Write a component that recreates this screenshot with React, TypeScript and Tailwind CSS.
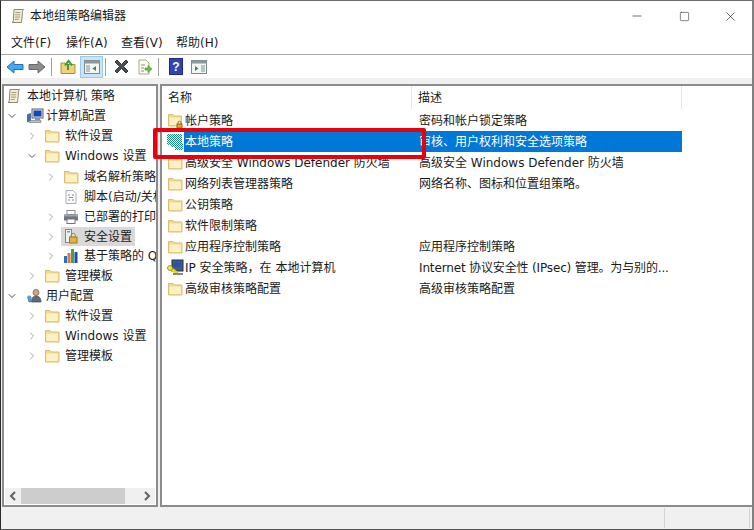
import { ChevronDown, ChevronRight, Minus, Square, X } from "lucide-react";

const FONT = "font-['DejaVu_Sans','Noto_Sans_CJK_SC',sans-serif]";

// Small icons
const Folder = ({ className = "" }: { className?: string }) => (
  <svg width="16" height="16" viewBox="0 0 16 16" className={`shrink-0 ${className}`}>
    <path d="M1.500 2.500h4.500l1.200 1.500h7.800v10h-13.500z" fill="#f3d98c" stroke="#d8bd74" />
    <rect x="2.500" y="5.500" width="11.500" height="7.500" fill="#fdf1c4" />
  </svg>
);

const ScrollIcon = ({ className = "" }: { className?: string }) => (
  <svg width="16" height="16" viewBox="0 0 16 16" className={`shrink-0 ${className}`}>
    <path d="M4 1.500h9.500c-1 1-1.200 2-1 3L11.500 14.500H2c1-.6 1.300-1.300 1.400-2.500z" fill="#f4edd4" stroke="#8f8770" />
    <path d="M5.500 4.500h5M5.200 6.800h5M5 9.100h5M4.800 11.400h4" stroke="#a39a80" />
  </svg>
);

const ComputerIcon = () => (
  <svg width="18" height="16" viewBox="0 0 18 16" className="shrink-0">
    <rect x="6" y="1" width="11" height="9" fill="#dfe6ef" stroke="#59636f" />
    <rect x="7.500" y="2.500" width="8" height="6" fill="#1447b0" />
    <rect x="9" y="10" width="5" height="2" fill="#8d97a3" />
    <path d="M1.500 6.500l3-1v7l-3 1.500z" fill="#3c6fb8" stroke="#2c4470" strokeWidth=".6" />
    <path d="M5 12.500h10v2H3z" fill="#b8c0ca" stroke="#6f7782" strokeWidth=".6" />
  </svg>
);

const UserIcon = () => (
  <svg width="18" height="16" viewBox="0 0 18 16" className="shrink-0">
    <circle cx="10" cy="4.500" r="3" fill="#d9a37c" stroke="#6b5a4a" strokeWidth=".7" />
    <path d="M5.500 14c0-4 1.500-6 4.500-6s5 2 5 6z" fill="#5c6c80" stroke="#3a4656" strokeWidth=".7" />
    <path d="M1.500 9c1-1.500 3-1.500 3.500 0l-.5 5H3z" fill="#5fa0d8" stroke="#3470a8" strokeWidth=".7" />
  </svg>
);

const ScriptIcon = () => (
  <svg width="16" height="16" viewBox="0 0 16 16" className="shrink-0">
    <path d="M3 1.500h7l3 3v10H3z" fill="#fbfbfb" stroke="#a9adb3" />
    <path d="M5 6h2M9 6h2M6 8.500h4M5 11h2M9 11h2" stroke="#7f858c" />
  </svg>
);

const PrinterIcon = () => (
  <svg width="16" height="16" viewBox="0 0 16 16" className="shrink-0">
    <rect x="4" y="1.500" width="8" height="4" fill="#fff" stroke="#8a8f96" />
    <rect x="1" y="5.500" width="14" height="6" fill="#6e7680" />
    <rect x="1" y="5.500" width="14" height="2" fill="#9aa1aa" />
    <rect x="4" y="10" width="8" height="4.500" fill="#fff" stroke="#6e7680" />
  </svg>
);

const LockDocIcon = () => (
  <svg width="16" height="16" viewBox="0 0 16 16" className="shrink-0">
    <rect x="2.500" y="0.500" width="6" height="13" fill="#eef1f4" stroke="#7f8892" />
    <rect x="4" y="2" width="3" height="1.500" fill="#8a96a3" />
    <path d="M8 8V6.500a2.200 2.200 0 0 1 4.400 0V8" fill="none" stroke="#9a8a5a" />
    <rect x="6.500" y="8" width="7.500" height="6" fill="#e2b33e" stroke="#9a7a22" />
  </svg>
);

const ChartIcon = () => (
  <svg width="16" height="16" viewBox="0 0 16 16" className="shrink-0">
    <rect x="1" y="8" width="3" height="7" fill="#2a6fc0" />
    <rect x="4.500" y="5" width="3" height="10" fill="#e8703a" />
    <rect x="8" y="1" width="3" height="14" fill="#3aa84a" />
    <rect x="11.500" y="4" width="3" height="11" fill="#1d4f9a" />
  </svg>
);

const FolderLockIcon = () => (
  <svg width="18" height="16" viewBox="0 0 18 16" className="shrink-0">
    <path d="M1.500 1.500h4.500l1.200 1.500h7.300v10h-13z" fill="#f3d98c" stroke="#d8bd74" />
    <rect x="2.500" y="4.500" width="11" height="7.500" fill="#fdf1c4" />
    <path d="M11 11V9.800a1.500 1.500 0 0 1 3 0V11" fill="none" stroke="#8a7a3a" />
    <rect x="10" y="11" width="5" height="4" fill="#d9a92e" stroke="#8f6f18" />
  </svg>
);

const LocalPolicyIcon = () => (
  <svg width="17" height="17" viewBox="0 0 17 17" className="shrink-0">
    <defs>
      <pattern id="dither" width="2" height="2" patternUnits="userSpaceOnUse">
        <rect width="2" height="2" fill="#f2f6f4" />
        <rect width="1" height="1" fill="#1f7f9f" />
        <rect x="1" y="1" width="1" height="1" fill="#1f8f80" />
      </pattern>
    </defs>
    <path d="M0 1h15v10h1v6H8v-3H4v-2H0z" fill="url(#dither)" />
  </svg>
);

const IpsecIcon = () => (
  <svg width="18" height="18" viewBox="0 0 18 18" className="shrink-0">
    <rect x="5" y="1" width="11" height="11" fill="#4a5a78" stroke="#26304a" />
    <rect x="7" y="3" width="7" height="5" fill="#2a50a8" />
    <path d="M2 8l9 7" stroke="#e8d820" strokeWidth="3" />
    <circle cx="3" cy="9" r="2.500" fill="#f2e640" stroke="#6b6510" strokeWidth=".6" />
    <path d="M6 14h10v2H6z" fill="#7d8796" />
  </svg>
);

const tree = [
  { label: "本地计算机 策略", icon: <ScrollIcon />, row: "pl-[2px] gap-[5px] h-[20px]", arrow: null },
  { label: "计算机配置", icon: <ComputerIcon />, row: "pl-[3px] gap-[2px] h-[20px]", arrow: "root" },
  { label: "软件设置", icon: <Folder />, row: "pl-[23px] gap-[5px] h-[20px]", arrow: "closed" },
  { label: "Windows 设置", icon: <Folder />, row: "pl-[23px] gap-[5px] h-[20px]", arrow: "open" },
  { label: "域名解析策略", icon: <Folder />, row: "pl-[42px] gap-[5px] h-[21px]", arrow: "closed" },
  { label: "脚本(启动/关机)", icon: <ScriptIcon />, row: "pl-[59px] gap-[5px] h-[20px]", arrow: null },
  { label: "已部署的打印机", icon: <PrinterIcon />, row: "pl-[42px] gap-[5px] h-[20px]", arrow: "closed" },
  { label: "安全设置", icon: <LockDocIcon />, row: "pl-[42px] gap-[5px] h-[19px]", arrow: "closed", active: true },
  { label: "基于策略的 QoS", icon: <ChartIcon />, row: "pl-[42px] gap-[5px] h-[20px]", arrow: "closed" },
  { label: "管理模板", icon: <Folder />, row: "pl-[23px] gap-[5px] h-[20px]", arrow: "closed" },
  { label: "用户配置", icon: <UserIcon />, row: "pl-[3px] gap-[2px] h-[20px]", arrow: "root" },
  { label: "软件设置", icon: <Folder />, row: "pl-[23px] gap-[5px] h-[20px]", arrow: "closed" },
  { label: "Windows 设置", icon: <Folder />, row: "pl-[23px] gap-[5px] h-[20px]", arrow: "closed" },
  { label: "管理模板", icon: <Folder />, row: "pl-[23px] gap-[5px] h-[20px]", arrow: "closed" },
];

const rows = [
  { name: "帐户策略", desc: "密码和帐户锁定策略", icon: <FolderLockIcon /> },
  { name: "本地策略", desc: "审核、用户权利和安全选项策略", icon: <LocalPolicyIcon />, selected: true },
  { name: "高级安全 Windows Defender 防火墙", desc: "高级安全 Windows Defender 防火墙", icon: <Folder /> },
  { name: "网络列表管理器策略", desc: "网络名称、图标和位置组策略。", icon: <Folder /> },
  { name: "公钥策略", desc: "", icon: <Folder /> },
  { name: "软件限制策略", desc: "", icon: <Folder /> },
  { name: "应用程序控制策略", desc: "应用程序控制策略", icon: <Folder /> },
  { name: "IP 安全策略，在 本地计算机", desc: "Internet 协议安全性 (IPsec) 管理。为与别的...", icon: <IpsecIcon />, tight: true },
  { name: "高级审核策略配置", desc: "高级审核策略配置", icon: <Folder /> },
];

const menus = ["文件(F)", "操作(A)", "查看(V)", "帮助(H)"];

const Sep = ({ className = "mx-[5px]" }: { className?: string }) => (
  <div className={`w-px h-[18px] bg-[#a0a0a0] ${className}`} />
);

const ChevronLeftGlyph = () => (
  <svg width="8" height="10" viewBox="0 0 8 10"><path d="M6 1L2 5l4 4" fill="none" stroke="#606060" strokeWidth="2" /></svg>
);
const ChevronRightGlyph = () => (
  <svg width="8" height="10" viewBox="0 0 8 10"><path d="M2 1l4 4-4 4" fill="none" stroke="#606060" strokeWidth="2" /></svg>
);

const App = () => {
  return (
    <div className={`relative w-[754px] h-[530px] flex flex-col overflow-hidden bg-white text-[12px] text-[#1a1a1a] border-l border-t border-b border-r-2 border-l-[#2b2b2b] border-t-[#6e6e6e] border-b-[#555555] border-r-[#808080] ${FONT}`}>
      {/* Title bar */}
      <div className="h-[30px] flex items-center shrink-0">
        <ScrollIcon className="ml-[9px]" />
        <span className="ml-[4px] text-[12px]">本地组策略编辑器</span>
        <div className="ml-auto flex items-center text-[#111111]">
          <div className="w-[46px] flex justify-center mr-[1px]"><Minus size={14} strokeWidth={1} /></div>
          <div className="w-[46px] flex justify-center"><Square size={11} strokeWidth={1.1} /></div>
          <div className="w-[46px] flex justify-center -mr-px"><X size={15} strokeWidth={1} /></div>
        </div>
      </div>

      {/* Menu */}
      <div className="h-[24px] flex items-center gap-[15px] pl-[10px] border-b border-[#a8a8a8] shrink-0">
        {menus.map((m) => (
          <span key={m} className="w-[40px] whitespace-nowrap">{m}</span>
        ))}
      </div>

      {/* Toolbar */}
      <div className="h-[23px] flex items-center pl-[5px] shrink-0">
        <svg width="18" height="14" viewBox="0 0 18 14">
          <path d="M1 7l7-6v3.500h9v5H8V13z" fill="#45a8ec" stroke="#1f6fb5" />
        </svg>
        <svg width="18" height="14" viewBox="0 0 18 14" className="ml-[4px]">
          <path d="M17 7l-7-6v3.500H1v5h9V13z" fill="#8c8c8c" stroke="#6a6a6a" />
        </svg>
        <Sep />
        <svg width="16" height="16" viewBox="0 0 16 16" className="ml-[3px]">
          <path d="M1 4h4l1 1.500h9v9H1z" fill="#f0d27a" stroke="#a88c3a" />
          <path d="M8 11V5M5 6.500L8.500 2 12 6.500" fill="none" stroke="#3a9a3a" strokeWidth="2" />
        </svg>
        <div className="ml-[4px] w-[23px] h-[22px] flex items-center justify-center bg-[#cce4f7] border border-[#99cceb]">
          <svg width="16" height="14" viewBox="0 0 16 14">
            <rect x=".5" y=".5" width="15" height="13" fill="#f4f6f6" stroke="#7d8a8a" />
            <rect x=".5" y=".5" width="15" height="3" fill="#8a9a9a" />
            <rect x="2" y="5" width="4" height="7" fill="#b8c4c4" />
            <path d="M12 6v5L8.500 8.500z" fill="#2f8f4a" />
          </svg>
        </div>
        <Sep className="ml-[2px] mr-[5px]" />
        <svg width="17" height="17" viewBox="0 0 17 17" className="ml-[2px]">
          <path d="M2 4l2-2 4.500 4.500L13 2l2 2-4.500 4.500L15 13l-2 2-4.500-4.500L4 15l-2-2 4.500-4.500z" fill="#4a4f55" stroke="#33373b" />
        </svg>
        <svg width="16" height="16" viewBox="0 0 16 16" className="ml-[7px]">
          <path d="M2 1h7l3 3v11H2z" fill="#fdfdf6" stroke="#b0a888" />
          <path d="M4 6h4M4 9h3M4 12h3" stroke="#8a8a7a" />
          <path d="M8 9h3V6.500l4 3.500-4 3.500V11H8z" fill="#6cc04a" stroke="#3f8f2a" strokeWidth=".6" />
        </svg>
        <Sep />
        <div className="ml-[5px] w-[14px] h-[17px] bg-[#2f45b0] border border-[#1a2a80] flex items-center justify-center text-white font-bold text-[12px] leading-none font-['Liberation_Sans',sans-serif]">?</div>
        <svg width="16" height="14" viewBox="0 0 16 14" className="ml-[8px]">
          <rect x=".5" y=".5" width="15" height="13" fill="#f4f6f6" stroke="#7d8a8a" />
          <rect x=".5" y=".5" width="15" height="3" fill="#8a9a9a" />
          <rect x="10" y="5" width="4" height="7" fill="#b8c4c4" />
          <path d="M4 6v5l3.500-2.500z" fill="#2f8f4a" />
        </svg>
      </div>

      {/* Panes */}
      <div className="flex-1 min-h-0 flex flex-col bg-[#f0f0f0] pt-[6px]">
        <div className="flex-1 min-h-0 flex gap-[2px] pl-px">
          {/* Tree */}
          <div className="w-[156px] shrink-0 flex flex-col bg-white border-2 border-[#8c8c8c] overflow-hidden">
            <div className="flex-1 min-h-0 overflow-hidden">
              {tree.map((t, i) => (
                <div key={i} className={`flex items-center whitespace-nowrap ${t.row}`}>
                  {t.arrow === "root" && <ChevronDown size={12} strokeWidth={2} className="shrink-0 -ml-[1px] mr-[6px] text-[#555555]" />}
                  {t.arrow === "open" && <ChevronDown size={12} strokeWidth={2} className="shrink-0 -ml-[1px] mr-[1px] text-[#555555]" />}
                  {t.arrow === "closed" && <ChevronRight size={12} strokeWidth={2} className="shrink-0 -ml-[1px] mr-[1px] text-[#a6a6a6]" />}
                  {t.active ? (
                    <div className="flex items-center gap-[5px] -ml-[2px] pl-[2px] pr-[3px] h-[19px] bg-[#d9d9d9]">
                      {t.icon}
                      <span>{t.label}</span>
                    </div>
                  ) : (
                    <>
                      {t.icon}
                      <span>{t.label}</span>
                    </>
                  )}
                </div>
              ))}
            </div>
            {/* Horizontal scrollbar */}
            <div className="h-[16px] mb-[1px] shrink-0 flex items-center bg-[#f0f0f0] mx-[1px]">
              <div className="w-[16px] flex justify-center"><ChevronLeftGlyph /></div>
              <div className="w-[104px] h-[16px] bg-[#cdcdcd]" />
              <div className="ml-auto w-[16px] flex justify-center"><ChevronRightGlyph /></div>
            </div>
          </div>

          {/* List */}
          <div className="flex-1 min-w-0 bg-white border-l-2 border-t-2 border-b-2 border-[#8c8c8c]">
            <div className="h-[23px] flex items-center">
              <div className="w-[250px] pl-[6px] h-full flex items-center border-r border-[#e5e5e5]">名称</div>
              <div className="w-[270px] pl-[6px] h-full flex items-center border-r border-[#e5e5e5]">描述</div>
            </div>
            <div className="pt-[1px]">
              {rows.map((r) => (
                <div key={r.name} className="h-[21px] flex items-center whitespace-nowrap w-[520px]">
                  <div className="w-[250px] shrink-0 h-full flex items-center pl-[5px]">
                    <div className="w-[17px] shrink-0 flex justify-start">{r.icon}</div>
                    <span className={`h-full flex-1 flex items-center pl-px ${r.selected ? "bg-[#0078d7] text-white" : ""}`}>{r.name}</span>
                  </div>
                  <div className={`w-[270px] h-full shrink-0 flex items-center pl-[7px] ${r.selected ? "bg-[#0078d7] text-white" : ""} ${r.tight ? "tracking-[-0.15px]" : ""}`}>{r.desc}</div>
                </div>
              ))}
            </div>
          </div>
        </div>

        {/* Status bar */}
        <div className="h-[22px] shrink-0 flex py-[1px]">
          <div className="w-[664px] border-r border-[#d4d4d4]" />
          <div className="w-[85px] border-r border-[#d4d4d4]" />
        </div>
      </div>

      {/* Red annotation box */}
      <div className="absolute left-[152px] top-[127px] w-[273px] h-[31px] border-[4px] border-[#e8000b] rounded-[2px]" />
    </div>
  );
};

export default App;
